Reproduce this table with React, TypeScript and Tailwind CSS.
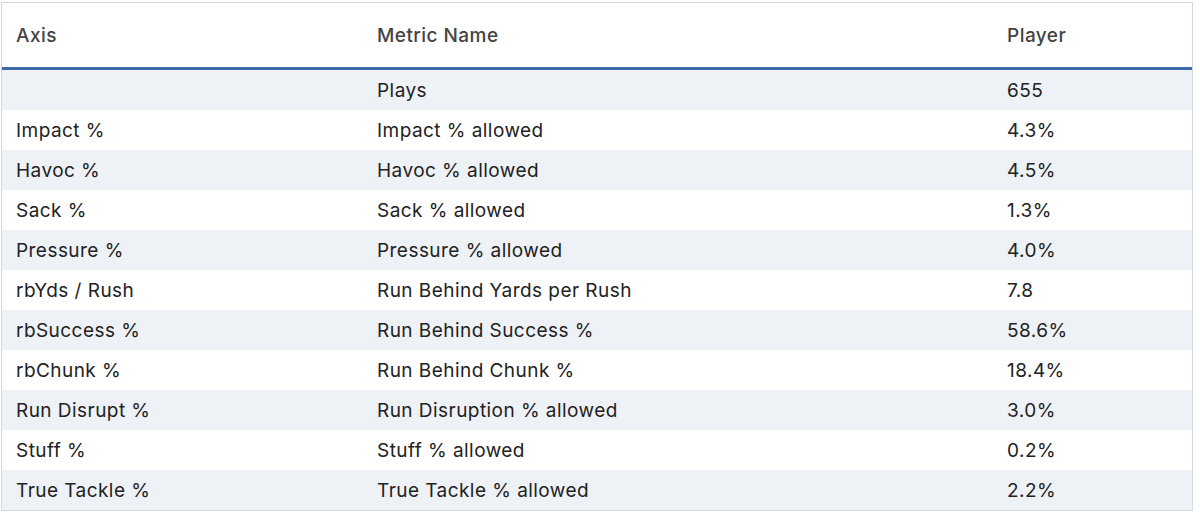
const rows: { axis: string; metric: string; player: string }[] = [
  { axis: '', metric: 'Plays', player: '655' },
  { axis: 'Impact %', metric: 'Impact % allowed', player: '4.3%' },
  { axis: 'Havoc %', metric: 'Havoc % allowed', player: '4.5%' },
  { axis: 'Sack %', metric: 'Sack % allowed', player: '1.3%' },
  { axis: 'Pressure %', metric: 'Pressure % allowed', player: '4.0%' },
  { axis: 'rbYds / Rush', metric: 'Run Behind Yards per Rush', player: '7.8' },
  { axis: 'rbSuccess %', metric: 'Run Behind Success %', player: '58.6%' },
  { axis: 'rbChunk %', metric: 'Run Behind Chunk %', player: '18.4%' },
  { axis: 'Run Disrupt %', metric: 'Run Disruption % allowed', player: '3.0%' },
  { axis: 'Stuff %', metric: 'Stuff % allowed', player: '0.2%' },
  { axis: 'True Tackle %', metric: 'True Tackle % allowed', player: '2.2%' },
];

export default function App(): JSX.Element {
  return (
    <div className="h-[515px] w-[1200px] bg-white pl-[1px] pt-[2px] font-['Inter','Liberation_Sans',sans-serif] text-[19px] tracking-[0.45px] text-[#222]">
      <div className="w-[1192px] border border-[#d3d8df]">
        <div className="flex h-[67px] items-center border-b-[3px] border-[#3e6aab] pt-[2px] font-medium text-[#444]">
          <div className="w-[361px] pl-[14px]">Axis</div>
          <div className="w-[630px] pl-[14px]">Metric Name</div>
          <div className="flex-1 pl-[14px]">Player</div>
        </div>
        {rows.map((row, index) => (
          <div
            key={row.metric}
            className={`flex h-[40px] items-center pt-[2px] ${index % 2 === 0 ? 'bg-[#eef1f5]' : 'bg-white'}`}
          >
            <div className="w-[361px] pl-[14px]">{row.axis}</div>
            <div className="w-[630px] pl-[14px]">{row.metric}</div>
            <div className="flex-1 pl-[14px]">{row.player}</div>
          </div>
        ))}
      </div>
    </div>
  );
}
